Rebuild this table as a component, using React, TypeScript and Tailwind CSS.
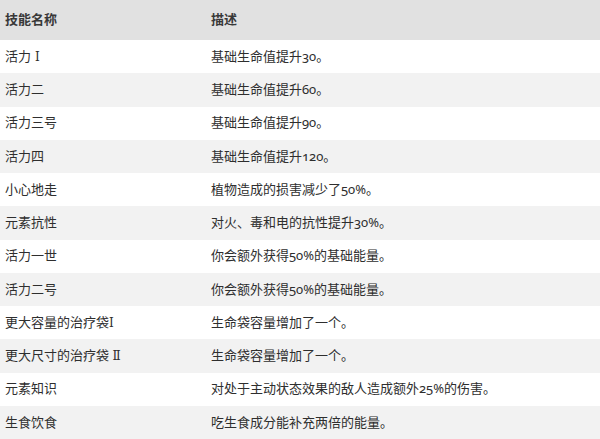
import type { ReactNode } from "react";

const serif = (t: string, extra = "") => (
  <span className={"font-['DejaVu_Serif','Liberation_Serif',serif] text-[12px] " + extra}>{t}</span>
);

const rows: [ReactNode, string][] = [
  [<>活力{serif("Ⅰ", "ml-[4px]")}</>, "基础生命值提升30。"],
  ["活力二", "基础生命值提升60。"],
  ["活力三号", "基础生命值提升90。"],
  ["活力四", "基础生命值提升120。"],
  ["小心地走", "植物造成的损害减少了50%。"],
  ["元素抗性", "对火、毒和电的抗性提升30%。"],
  ["活力一世", "你会额外获得50%的基础能量。"],
  ["活力二号", "你会额外获得50%的基础能量。"],
  [<>更大容量的治疗袋{serif("I")}</>, "生命袋容量增加了一个。"],
  [<>更大尺寸的治疗袋 {serif("Ⅱ")}</>, "生命袋容量增加了一个。"],
  ["元素知识", "对处于主动状态效果的敌人造成额外25%的伤害。"],
  ["生食饮食", "吃生食成分能补充两倍的能量。"],
];

export default function App() {
  return (
    <div className="w-[600px] h-[439px] bg-white text-[13px] text-[#2e2e2e] font-['Noto_Sans','Noto_Sans_CJK_SC',sans-serif] [font-variant-numeric:oldstyle-nums]">
      <div className="grid grid-cols-[211px_1fr] h-[40px] items-center bg-[#e1e1e1] font-bold text-[#383838]">
        <div className="pl-[5px]">技能名称</div>
        <div>描述</div>
      </div>
      {rows.map(([name, desc], i) => (
        <div
          key={i}
          className={
            "grid grid-cols-[211px_1fr] h-[33.25px] items-center " +
            (i % 2 === 0 ? "bg-white" : "bg-[#f2f2f2]")
          }
        >
          <div className="pl-[5px]">{name}</div>
          <div>{desc}</div>
        </div>
      ))}
    </div>
  );
}
